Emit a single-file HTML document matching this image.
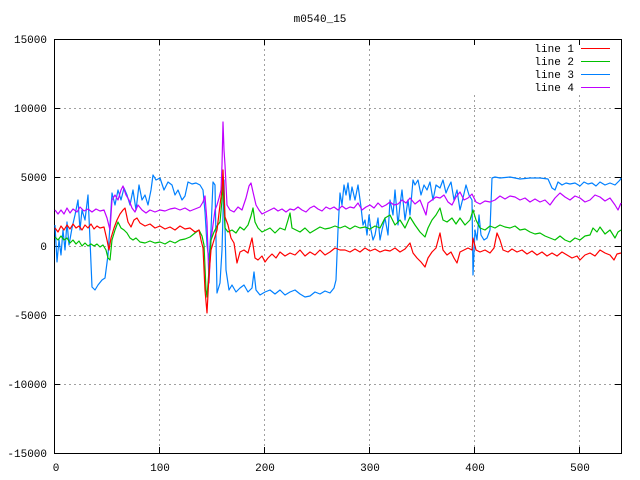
<!DOCTYPE html>
<html><head><meta charset="utf-8"><style>
html,body{margin:0;padding:0;background:#fff;}
svg{display:block;}
text{font-family:"Liberation Mono","DejaVu Sans Mono",monospace;font-size:11px;fill:#000;}
</style></head><body>
<svg width="640" height="480" viewBox="0 0 640 480" xmlns="http://www.w3.org/2000/svg">
<rect width="640" height="480" fill="#fff"/>
<g stroke="#a0a0a0" stroke-width="1" stroke-dasharray="2,3" fill="none">
<line x1="54" y1="108.5" x2="621" y2="108.5"/>
<line x1="54" y1="177.5" x2="621" y2="177.5"/>
<line x1="54" y1="246.5" x2="621" y2="246.5"/>
<line x1="54" y1="315.5" x2="621" y2="315.5"/>
<line x1="54" y1="384.5" x2="621" y2="384.5"/>
<line x1="159.5" y1="39" x2="159.5" y2="453"/>
<line x1="264.5" y1="39" x2="264.5" y2="453"/>
<line x1="369.5" y1="39" x2="369.5" y2="453"/>
<line x1="474.5" y1="95" x2="474.5" y2="453"/>
<line x1="579.5" y1="95" x2="579.5" y2="453"/>
</g>
<g stroke="#000" stroke-width="1" fill="none">
<rect x="54.5" y="39.5" width="567" height="414"/>
<path d="M54 108.5h6M54 177.5h6M54 246.5h6M54 315.5h6M54 384.5h6M621 108.5h-6M621 177.5h-6M621 246.5h-6M621 315.5h-6M621 384.5h-6M159.5 453v-6M264.5 453v-6M369.5 453v-6M474.5 453v-6M579.5 453v-6M159.5 39v6M264.5 39v6M369.5 39v6M474.5 39v6M579.5 39v6"/>
</g>
<g text-anchor="end">
<text x="47" y="43">15000</text>
<text x="47" y="112">10000</text>
<text x="47" y="181">5000</text>
<text x="47" y="250">0</text>
<text x="47" y="319">-5000</text>
<text x="47" y="388">-10000</text>
<text x="47" y="457">-15000</text>
</g>
<g text-anchor="middle">
<text x="56" y="471">0</text>
<text x="160" y="471">100</text>
<text x="265" y="471">200</text>
<text x="370" y="471">300</text>
<text x="475" y="471">400</text>
<text x="580" y="471">500</text>
<text x="320" y="22">m0540_15</text>
</g>
<g text-anchor="end">
<text x="574" y="52">line 1</text>
<text x="574" y="65">line 2</text>
<text x="574" y="78">line 3</text>
<text x="574" y="91">line 4</text>
</g>
<line x1="581" y1="48.5" x2="610" y2="48.5" stroke="#ff0000"/>
<line x1="581" y1="61.5" x2="610" y2="61.5" stroke="#00c000"/>
<line x1="581" y1="74.5" x2="610" y2="74.5" stroke="#0080ff"/>
<line x1="581" y1="87.5" x2="610" y2="87.5" stroke="#c000ff"/>
<g fill="none" stroke-width="1.2" stroke-linejoin="round">
<polyline stroke="#0080ff" points="55,225 57,262 59,240 61,255 63,230 65,250 67,222 69,245 72,228 75,215 78,200 80,230 82,210 85,220 88,195 90,240 92,287 95,290 98,285 102,280 105,278 108,255 110,225 112,193 115,205 118,190 121,200 124,188 127,195 130,205 133,190 136,210 139,185 142,200 145,195 148,205 151,190 153,175 156,180 160,178 164,190 168,182 172,185 175,195 178,190 182,200 185,196 188,182 192,184 196,183 200,185 203,190 205,212 207,245 209,260 211,230 213,182 215,185 217,293 220,283 222,250 224,180 226,270 229,290 232,285 236,292 240,288 244,285 248,292 252,288 254,272 256,290 260,295 265,292 270,290 275,294 280,290 285,295 290,292 295,290 300,294 305,297 310,296 315,292 320,294 325,291 330,293 334,288 336,280 338,230 340,193 342,205 344,185 346,195 348,183 350,200 352,187 355,200 358,185 361,207 363,225 365,220 367,235 369,215 371,230 373,240 375,235 378,218 380,240 382,230 385,218 388,235 390,200 393,215 395,190 398,225 400,205 402,190 405,220 408,200 410,215 413,180 415,185 418,180 421,195 424,185 427,190 430,182 433,200 436,185 440,188 443,180 446,193 448,188 451,182 454,200 457,190 460,210 463,198 466,185 469,195 472,200 473,275 475,230 477,240 479,215 481,235 484,240 487,238 490,230 492,178 495,177 500,178 510,177 520,179 530,178 540,178 548,179 552,188 555,190 558,182 562,185 566,183 570,184 575,183 580,186 584,182 588,184 592,183 596,186 600,182 605,185 610,183 615,185 620,180 621,178"/>
<polyline stroke="#c000ff" points="55,210 58,214 61,210 64,214 67,208 70,213 73,209 77,212 80,207 84,211 88,209 92,212 96,209 100,211 104,210 107,218 110,230 112,200 115,195 118,200 121,190 123,186 126,195 129,200 132,208 135,212 138,205 142,210 146,213 150,210 155,212 160,210 165,211 170,209 175,208 180,210 185,208 190,211 195,209 200,207 203,202 205,196 207,222 209,283 211,240 213,225 215,210 217,205 219,198 221,190 222,165 223,122 224,150 225,165 227,205 230,210 234,212 238,207 242,210 246,198 249,186 251,183 253,192 256,205 259,210 262,214 266,212 270,210 274,208 278,211 282,209 286,212 290,209 294,210 298,207 302,210 306,212 310,208 314,206 318,209 322,211 326,207 330,209 334,207 338,210 342,206 346,209 350,207 354,208 358,203 362,210 366,207 370,205 374,208 378,203 382,207 386,205 390,202 394,205 398,204 402,200 406,203 410,198 415,204 420,200 424,210 426,215 428,203 432,200 436,197 440,198 444,195 448,202 452,205 456,197 460,192 464,200 468,198 472,194 476,202 480,204 485,201 490,202 495,200 500,196 505,199 510,196 515,197 520,200 525,198 530,202 535,199 540,202 545,200 550,205 555,198 560,193 565,197 570,200 575,196 580,198 585,202 590,200 595,195 600,197 605,201 610,198 615,205 618,210 621,203"/>
<polyline stroke="#00c000" points="55,237 58,240 61,236 64,240 67,238 70,243 73,240 76,244 79,241 82,246 85,243 88,246 91,244 94,246 97,244 100,247 103,245 106,250 108,258 110,260 112,240 115,230 118,222 121,228 124,230 127,233 130,238 133,240 136,238 140,242 145,243 150,241 155,243 160,242 165,244 170,241 175,243 180,240 185,239 190,237 195,233 199,230 202,236 204,245 206,290 207,297 209,270 211,240 214,232 217,226 220,222 222,200 223,183 225,228 228,232 232,230 236,233 240,227 244,230 248,225 251,216 253,208 255,222 258,228 262,232 266,230 270,228 275,233 280,228 285,230 288,220 290,213 292,228 296,230 300,232 305,228 310,233 315,230 320,227 325,229 330,228 335,226 340,228 345,226 350,229 355,226 360,228 365,227 370,229 375,226 380,228 385,218 390,215 395,225 400,220 405,228 410,217 415,225 420,232 425,237 428,228 432,220 436,215 440,208 443,220 447,222 452,218 456,224 460,218 465,225 470,220 473,210 476,220 480,228 485,230 490,226 495,228 500,225 505,227 510,228 515,226 520,230 525,229 530,232 535,234 540,233 545,236 550,238 555,240 560,236 565,240 570,242 575,238 580,240 585,236 590,235 593,228 597,232 600,227 605,234 610,230 615,238 618,232 621,230"/>
<polyline stroke="#ff0000" points="55,228 58,232 61,226 64,230 67,225 70,229 73,224 76,228 79,226 82,230 85,225 88,228 91,224 94,229 97,226 100,228 104,227 107,240 109,250 111,238 114,228 117,220 120,214 123,210 125,208 128,222 131,227 134,220 137,218 140,223 145,226 150,224 155,228 160,226 165,229 170,227 175,230 180,226 185,229 190,228 195,232 199,230 201,240 203,248 205,290 207,313 209,275 211,250 214,240 217,230 220,205 222,190 223,170 225,217 228,225 231,238 234,243 237,263 240,252 244,250 248,253 252,238 255,258 258,260 262,256 265,262 268,258 272,254 276,258 280,252 285,256 290,253 295,255 300,250 305,256 310,252 315,255 320,250 325,255 330,252 335,248 340,250 345,250 350,252 355,249 360,252 365,248 370,251 375,249 380,252 385,250 390,251 395,248 400,252 405,249 410,243 413,253 417,258 421,262 425,267 428,258 432,252 436,248 440,233 443,250 447,255 451,252 454,258 457,263 460,252 464,250 468,248 472,250 473,238 476,250 480,252 485,250 490,253 494,248 497,233 500,240 503,250 508,252 512,249 517,252 522,250 527,254 532,251 537,255 542,252 547,256 552,253 557,256 562,252 567,255 572,258 577,256 580,260 585,255 590,253 595,256 600,250 605,253 610,255 614,260 617,254 621,253"/>
</g>
</svg>
</body></html>
